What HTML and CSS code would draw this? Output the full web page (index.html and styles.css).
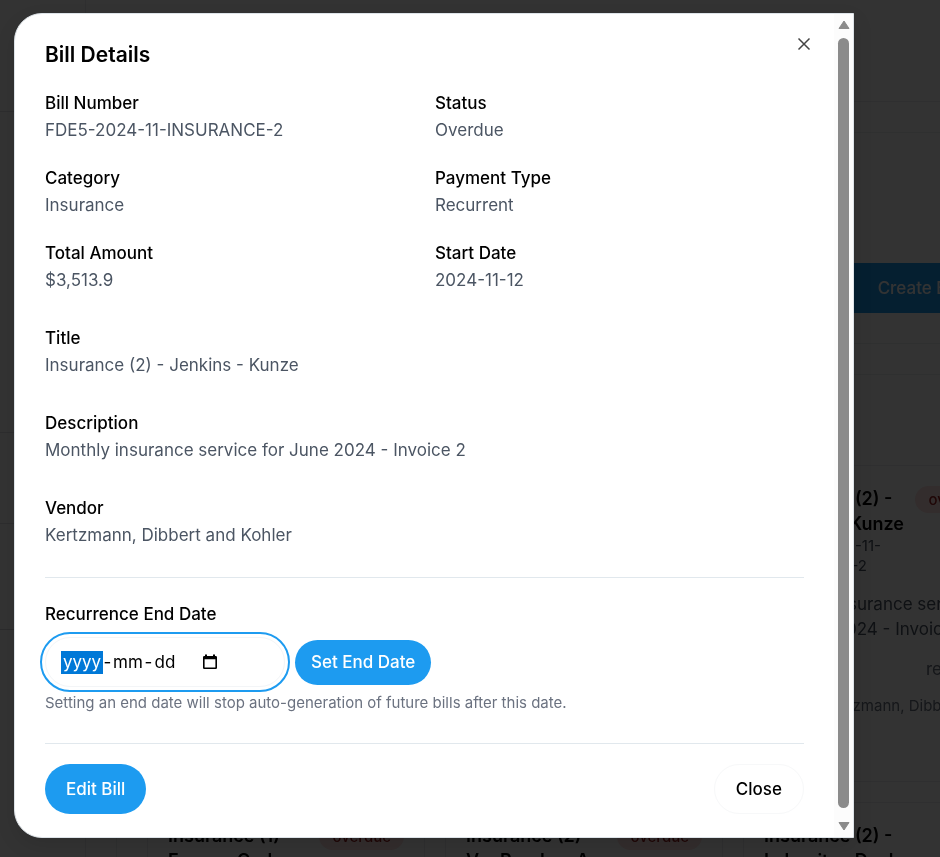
FILE: index.html
```html
<!DOCTYPE html>
<html lang="en">
<head>
<meta charset="utf-8">
<meta name="viewport" content="width=device-width, initial-scale=1">
<title>Bill Details</title>
<link rel="stylesheet" href="styles.css">
</head>
<body>
<div class="page" inert>
  <div class="sidebar">
    <div class="side-brand"></div>
    <div class="side-links"></div>
    <div class="side-group"></div>
    <div class="side-user"></div>
  </div>
  <div class="main">
    <div class="topbar"></div>
    <div class="panel actions"><button class="create" type="button">Create Bill</button></div>
    <div class="panel bills">
      <div class="cards">
        <div class="card"></div>
        <div class="card"></div>
        <article class="card">
          <div class="card-head">
            <h3>Insurance (2) - Jenkins - Kunze</h3>
            <span class="badge">overdue</span>
          </div>
          <p class="card-id">#FDE5-2024-11-INSURANCE-2</p>
          <p class="card-text">Monthly insurance service for June 2024 - Invoice 2</p>
          <p class="card-type">recurrent</p>
          <p class="card-vendor">Vendor: Kertzmann, Dibbert and Kohler</p>
        </article>
        <article class="card">
          <div class="card-head">
            <h3>Insurance (1) - Farrow, Cedar</h3>
            <span class="badge">overdue</span>
          </div>
        </article>
        <article class="card">
          <div class="card-head">
            <h3>Insurance (2) - VonRueden, A</h3>
            <span class="badge">overdue</span>
          </div>
        </article>
        <article class="card">
          <div class="card-head">
            <h3>Insurance (2) - Labneiter, Dach</h3>
          </div>
        </article>
      </div>
    </div>
  </div>
</div>
<div class="overlay"></div>

<div class="modal" role="dialog" aria-modal="true" aria-labelledby="dialog-title">
  <div class="content">
    <header class="head">
      <h2 id="dialog-title">Bill Details</h2>
      <button class="dismiss" type="button" aria-label="Close dialog">
        <svg width="18" height="18" viewBox="0 0 18 18"><path d="M3.5 3.5 14.5 14.5M14.5 3.5 3.5 14.5"/></svg>
      </button>
    </header>
    <dl class="fields">
      <div><dt>Bill Number</dt><dd>FDE5-2024-11-INSURANCE-2</dd></div>
      <div><dt>Status</dt><dd>Overdue</dd></div>
      <div><dt>Category</dt><dd>Insurance</dd></div>
      <div><dt>Payment Type</dt><dd>Recurrent</dd></div>
      <div><dt>Total Amount</dt><dd>$3,513.9</dd></div>
      <div><dt>Start Date</dt><dd>2024-11-12</dd></div>
    </dl>
    <dl class="stack">
      <div><dt>Title</dt><dd>Insurance (2) - Jenkins - Kunze</dd></div>
      <div><dt>Description</dt><dd>Monthly insurance service for June 2024 - Invoice 2</dd></div>
      <div><dt>Vendor</dt><dd>Kertzmann, Dibbert and Kohler</dd></div>
    </dl>
    <section class="recurrence">
      <label for="end-year">Recurrence End Date</label>
      <div class="date-row">
        <div class="date-box">
          <input id="end-year" class="part year" value="yyyy"><span class="dash">-</span><input class="part month" value="mm" aria-label="Month"><span class="dash">-</span><input class="part day" value="dd" aria-label="Day">
          <button class="picker" type="button" aria-label="Show date picker">
            <svg width="16" height="16" viewBox="0 0 16 16"><path fill-rule="evenodd" d="M3 0.5h2V2h6V0.5h2V2h0.7q1.3 0 1.3 1.3v10.4q0 1.3-1.3 1.3H2.3Q1 15 1 13.7V3.3Q1 2 2.3 2H3zM2.6 5.3v8.1h10.8V5.3z"/></svg>
          </button>
        </div>
        <button class="btn small" type="button">Set End Date</button>
      </div>
      <p class="hint">Setting an end date will stop auto-generation of future bills after this date.</p>
    </section>
    <footer class="foot">
      <button class="btn" type="button">Edit Bill</button>
      <button class="btn plain" type="button">Close</button>
    </footer>
  </div>
  <div class="scroll">
    <svg width="12" height="10" viewBox="0 0 12 10"><path d="M6 1 11 8.5H1z"/></svg>
    <div class="thumb"></div>
    <svg width="12" height="10" viewBox="0 0 12 10"><path d="M6 9 11 1.5H1z"/></svg>
  </div>
</div>
</body>
</html>
```
FILE: styles.css
```css
* { box-sizing: border-box; }
html { height: 100%; }
body {
  margin: 0;
  height: 100%;
  overflow: hidden;
  font: 17px/27px Inter, "Liberation Sans", sans-serif;
  color: #000;
  background: #fff;
}
h2, h3, p, dl, dd { margin: 0; }
button, input { font: inherit; color: inherit; }
button { border: 0; padding: 0; background: none; cursor: pointer; }

/* Page behind the dialog */
.page { position: fixed; inset: 0; display: flex; overflow: hidden; }
.sidebar { flex: 0 0 86px; border-right: 1px solid #e8eaed; }
.side-brand { height: 112px; border-bottom: 1px solid #e0e2e6; }
.side-links { height: 321px; border-bottom: 1px solid #e0e2e6; }
.side-group { height: 91px; border-bottom: 1px solid #e0e2e6; }
.side-user { height: 106px; border-bottom: 1px solid #d4d6da; }
.main { flex: 1 0 964px; }
.topbar { height: 102px; border-bottom: 1px solid #e8eaed; }
.panel { margin: 30px 0 0 30px; border: 1px solid #eceef0; }
.actions { height: 212px; padding: 130px 57px 0 0; text-align: right; }
.create { width: 150px; height: 50px; padding: 0 20px; background: #1d9bf0; color: #fff; font-weight: 500; }
.bills { padding: 90px 30px 0; }
.cards { display: grid; grid-template-columns: repeat(3, 278px); grid-auto-rows: 317px; gap: 20px; }
.card { padding: 20px; border: 1px solid #e8eaed; }
.card-head { display: flex; justify-content: space-between; align-items: flex-start; gap: 8px; }
.card h3 { flex: 0 1 140px; font-size: 18px; line-height: 25px; font-weight: 600; }
.badge { padding: 0 13px; border-radius: 14px; background: #fee2e2; color: #991b1b; font-size: 15px; line-height: 27px; font-weight: 500; }
.card-id { width: 130px; font-size: 15px; line-height: 20px; color: #4b5563; }
.card-text { margin-top: 16px; line-height: 25px; color: #4b5563; }
.card-type { margin-top: 14px; color: #6b7280; text-align: right; }
.card-vendor { margin-top: 9px; font-size: 15px; color: #6b7280; white-space: nowrap; overflow: hidden; }
.overlay { position: fixed; inset: 0; background: rgba(0, 0, 0, 0.8); }

/* Dialog */
.modal {
  position: relative;
  display: flex;
  margin: 13px 86px 0 14px;
  border: 1px solid #dde3e8;
  border-radius: 28px 0 0 28px;
  background: #fff;
  box-shadow: 0 8px 20px rgba(0, 0, 0, 0.1);
}
.content { flex: 1; min-width: 0; padding: 24px 30px 23px; }
.head { display: flex; justify-content: space-between; }
.head h2 { font-size: 21px; line-height: 34px; font-weight: 600; }
.dismiss { display: flex; margin: -3px -9px 0 0; align-self: flex-start; }
.dismiss path { fill: none; stroke: #444; stroke-width: 1.5; }
.fields { display: grid; grid-template-columns: 1fr 1fr; gap: 21px; margin-top: 18px; }
.stack { display: grid; gap: 31px; margin-top: 31px; }
dt, label { font-weight: 500; }
dd { color: #4b5563; }
.recurrence { margin-top: 28px; padding-top: 23px; border-top: 1px solid #e1e8ed; }
.recurrence label { display: block; }
.date-row { display: flex; align-items: center; gap: 10px; margin-top: 9px; }
.date-box {
  display: flex;
  align-items: center;
  width: 240px;
  height: 50px;
  padding: 0 15px;
  border: 1px solid #f3f5f7;
  border-radius: 25px;
  outline: 2px solid #1d9bf0;
  outline-offset: 3px;
}
.part { height: 23px; padding: 0; border: 0; outline: 0; background: none; text-align: center; }
.year { width: 42px; background: #0078d7; color: #fff; }
.month { width: 32px; }
.day { width: 24px; }
.dash { width: 9px; text-align: center; }
.picker { display: flex; margin-left: 25px; }
.btn { height: 50px; padding: 0 21px; border-radius: 25px; background: #1d9bf0; color: #fff; font-weight: 500; }
.btn.small { height: 45px; padding: 0 16px; }
.btn.plain { border: 1px solid #f7f8f9; background: #fff; color: #000; }
.hint { margin-top: 4px; font-size: 15px; line-height: 24px; color: #6b7280; }
.foot { display: flex; justify-content: space-between; margin-top: 28px; padding-top: 20px; border-top: 1px solid #e1e8ed; }
.scroll { display: flex; flex: 0 0 19px; flex-direction: column; align-items: center; padding: 6px 0; background: #fcfcfc; }
.scroll path { fill: #8b8b8b; stroke: #8b8b8b; stroke-linejoin: round; }
.thumb { flex: 1; width: 11px; margin: 8px 0 13px; border-radius: 6px; background: #8b8b8b; }
```
